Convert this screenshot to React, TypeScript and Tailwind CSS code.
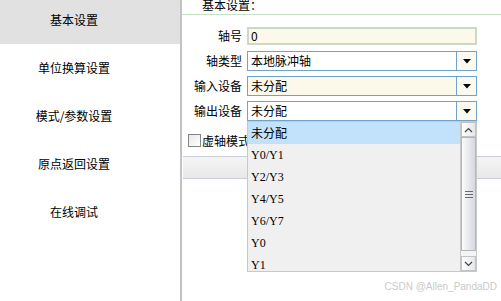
import React from 'react'

const font = { fontFamily: '"Noto Sans CJK SC", "Liberation Sans", sans-serif' }

const menu = ['基本设置', '单位换算设置', '模式/参数设置', '原点返回设置', '在线调试']
const options = ['未分配', 'Y0/Y1', 'Y2/Y3', 'Y4/Y5', 'Y6/Y7', 'Y0', 'Y1']

function Arrow() {
  return (
    <div className="w-[20px] h-full border-l border-[#6fa3cb] bg-[#fcf9ef] flex items-center justify-center">
      <svg width="8" height="5" viewBox="0 0 8 5">
        <path d="M0 0 H8 L4 4.5 Z" fill="#000" />
      </svg>
    </div>
  )
}

function Select({ value, bg }: { value: string; bg: string }) {
  return (
    <div className={`w-[230px] h-[20px] border border-[#6fa3cb] flex items-stretch ${bg}`}>
      <div className="flex-1 pl-[3px] text-[12px] leading-[18px] text-black">{value}</div>
      <Arrow />
    </div>
  )
}

function ScrollBar() {
  return (
    <div className="w-[16px] flex flex-col border-l border-[#c8c8c8] bg-[#f4f4f4]">
      <div className="h-[15px] border border-[#c2c2c2] bg-gradient-to-r from-[#ffffff] to-[#e4e6ea] flex items-center justify-center">
        <svg width="9" height="6" viewBox="0 0 9 6">
          <path d="M1 5 L4.5 1.5 L8 5" stroke="#444" strokeWidth="1.2" fill="none" />
        </svg>
      </div>
      <div className="flex-1 border border-[#b4b6bc] bg-gradient-to-r from-[#fbfbfc] to-[#d6d8e0] flex flex-col items-center justify-center gap-[2px]">
        <div className="w-[8px] h-px bg-[#6a6a6a]" />
        <div className="w-[8px] h-px bg-[#6a6a6a]" />
        <div className="w-[8px] h-px bg-[#6a6a6a]" />
      </div>
      <div className="h-[5px]" />
      <div className="h-[15px] border border-[#c2c2c2] bg-gradient-to-r from-[#ffffff] to-[#e4e6ea] flex items-center justify-center">
        <svg width="9" height="6" viewBox="0 0 9 6">
          <path d="M1 1 L4.5 4.5 L8 1" stroke="#444" strokeWidth="1.2" fill="none" />
        </svg>
      </div>
    </div>
  )
}

export default function App() {
  return (
    <div className="relative w-[501px] h-[301px] overflow-hidden bg-white flex text-black" style={font}>
      {/* 左侧菜单 */}
      <div className="w-[180px] flex flex-col -mt-[4px]">
        {menu.map((m, i) => (
          <div
            key={m}
            className={`h-[48px] flex items-center justify-center pr-[32px] text-[12px] ${i === 0 ? 'bg-[#e1e1e1]' : 'bg-white'}`}
          >
            {m}
          </div>
        ))}
      </div>
      <div className="w-[2px] bg-[#c3c3c3]" />

      {/* 右侧内容 */}
      <div className="flex-1 flex flex-col">
        <div className="h-[16px] border-b border-[#c6e2c6] pl-[20px] -mt-px text-[12px] leading-[12px]">基本设置：</div>

        <div className="flex flex-col mt-[12px]">
          <div className="flex items-center gap-[5px] h-[18px]">
            <div className="w-[60px] text-right text-[12px]">轴号</div>
            <div className="w-[230px] h-[18px] border-2 border-[#c7dcc2] bg-[#fcf8ea] pl-[2px] text-[12px] leading-[14px]">0</div>
          </div>
          <div className="flex items-center gap-[5px] h-[20px] mt-[6px]">
            <div className="w-[60px] text-right text-[12px]">轴类型</div>
            <Select value="本地脉冲轴" bg="bg-white" />
          </div>
          <div className="flex items-center gap-[5px] h-[20px] mt-[5px]">
            <div className="w-[60px] text-right text-[12px]">输入设备</div>
            <Select value="未分配" bg="bg-[#fcf8ea]" />
          </div>
          <div className="relative flex items-center gap-[5px] h-[20px] mt-[5px]">
            <div className="w-[60px] text-right text-[12px]">输出设备</div>
            <Select value="未分配" bg="bg-white" />

            {/* 下拉列表 */}
            <div className="absolute left-[65px] top-[20px] z-10 w-[230px] h-[151px] flex border border-[#c8c8c8] bg-[#f0f0f0]">
              <div className="flex-1 flex flex-col overflow-hidden">
                {options.map((o, i) => (
                  <div
                    key={o}
                    className={`h-[22px] shrink-0 flex items-center pl-[3px] text-[12px] ${i === 0 ? 'bg-[#c2e1fb]' : ''}`}
                    style={i === 0 ? undefined : { fontFamily: '"Liberation Serif", serif' }}
                  >
                    {o}
                  </div>
                ))}
              </div>
              <ScrollBar />
            </div>
          </div>
        </div>

        <div className="flex items-center gap-[1px] ml-[6px] mt-[13px] h-[13px]">
          <div className="w-[13px] h-[13px] border border-[#858585] bg-gradient-to-br from-[#e8e8e8] to-[#ffffff]" />
          <span className="text-[12px] leading-[13px] whitespace-nowrap">虚轴模式</span>
        </div>

        <div className="ml-px mt-[9px] h-[23px] border-t border-b border-[#c9ced8] bg-gradient-to-b from-[#f4f4f4] to-[#e9e9e9]" />
      </div>

      <div className="absolute right-[4px] bottom-[7px] text-[10px] text-[#cacaca]" style={{ fontFamily: '"Liberation Sans", sans-serif' }}>
        CSDN @Allen_PandaDD
      </div>
    </div>
  )
}
